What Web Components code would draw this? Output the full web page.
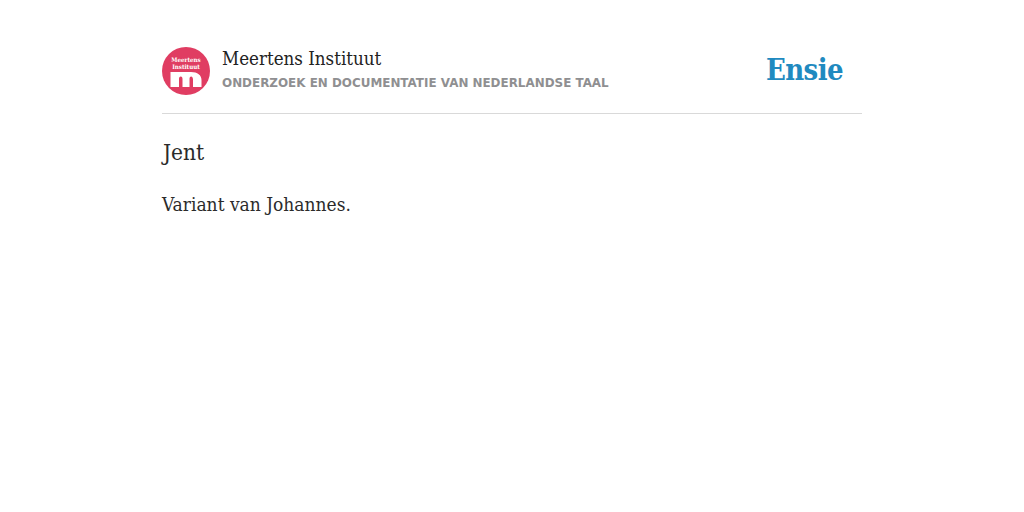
<!DOCTYPE html>
<html lang="nl">
<head>
<meta charset="utf-8">
<title>Jent</title>
<style>
  html, body { margin: 0; background: #fff; }
  body { font-family: "DejaVu Serif Condensed", "Liberation Serif", serif; color: #2b2b2b; }
</style>
</head>
<body>
<ensie-page>
  <ensie-header slot="header" title="Meertens Instituut" subtitle="ONDERZOEK EN DOCUMENTATIE VAN NEDERLANDSE TAAL"></ensie-header>
  <ensie-entry heading="Jent">Variant van Johannes.</ensie-entry>
</ensie-page>

<script>
class EnsiePage extends HTMLElement {
    constructor() {
        super();
        this.attachShadow({mode: "open"}).innerHTML = `
        <style>
            :host { display: block; width: 700px; margin: 0 auto; padding-top: 47px; }
        </style>
        <slot name="header"></slot>
        <slot></slot>`;
    }
}

class MeertensLogo extends HTMLElement {
    constructor() {
        super();
        this.attachShadow({mode: "open"}).innerHTML = `
        <style>
            :host { display: block; width: 48px; height: 48px; flex: none; }
            svg { display: block; }
            text { font-family: "DejaVu Serif Condensed", serif; font-weight: bold; font-size: 6.2px; fill: #fff; text-anchor: middle; }
        </style>
        <svg width="48" height="48" viewBox="0 0 48 48">
            <circle cx="24" cy="24" r="24" fill="#e03d62"/>
            <text x="24" y="15">Meertens</text>
            <text x="24" y="22">Instituut</text>
            <path fill="#fff" d="M8.500 40V25H29C35.500 25 39.500 28 39.500 33V40H31V32.500C31 30.500 30 29.500 29.200 29.500C28 29.500 27.500 30.500 27.500 32V40H20.500V32C20.500 30.500 20 29.500 18.800 29.500C17.500 29.500 17 30.500 17 32V40Z"/>
        </svg>`;
    }
}

class EnsieHeader extends HTMLElement {
    constructor() {
        super();
        this.attachShadow({mode: "open"});
    }

    connectedCallback() {
        this.render();
    }

    render() {
        this.shadowRoot.innerHTML = `
        <style>
            :host { display: flex; align-items: flex-start; height: 66px; border-bottom: 1px solid #d9d9d9; }
            .titles { margin-left: 12px; flex: 1; }
            .title { font-size: 18.6px; line-height: 24px; color: #222; }
            .subtitle { margin-top: 3px; font: bold 11.93px/18px "DejaVu Sans", sans-serif; color: #8f8f91; }
            .brand { margin: 3px 19px 0 0; font: bold 29px/40px "DejaVu Serif Condensed", serif; color: #1f8ac0; letter-spacing: -0.6px; }
        </style>
        <meertens-logo></meertens-logo>
        <div class="titles">
            <div class="title">${this.getAttribute("title")}</div>
            <div class="subtitle">${this.getAttribute("subtitle")}</div>
        </div>
        <div class="brand">Ensie</div>`;
    }
}

class EnsieEntry extends HTMLElement {
    constructor() {
        super();
        this.attachShadow({mode: "open"});
    }

    connectedCallback() {
        this.shadowRoot.innerHTML = `
        <style>
            :host { display: block; }
            h2 { margin: 21px 0 0 1px; font-weight: normal; font-size: 22.5px; line-height: 34px; }
            p { margin: 21px 0 0; font-size: 19px; line-height: 28px; }
        </style>
        <h2>${this.getAttribute("heading")}</h2>
        <p><slot></slot></p>`;
    }
}

customElements.define("ensie-page", EnsiePage);
customElements.define("meertens-logo", MeertensLogo);
customElements.define("ensie-header", EnsieHeader);
customElements.define("ensie-entry", EnsieEntry);
</script>
</body>
</html>
